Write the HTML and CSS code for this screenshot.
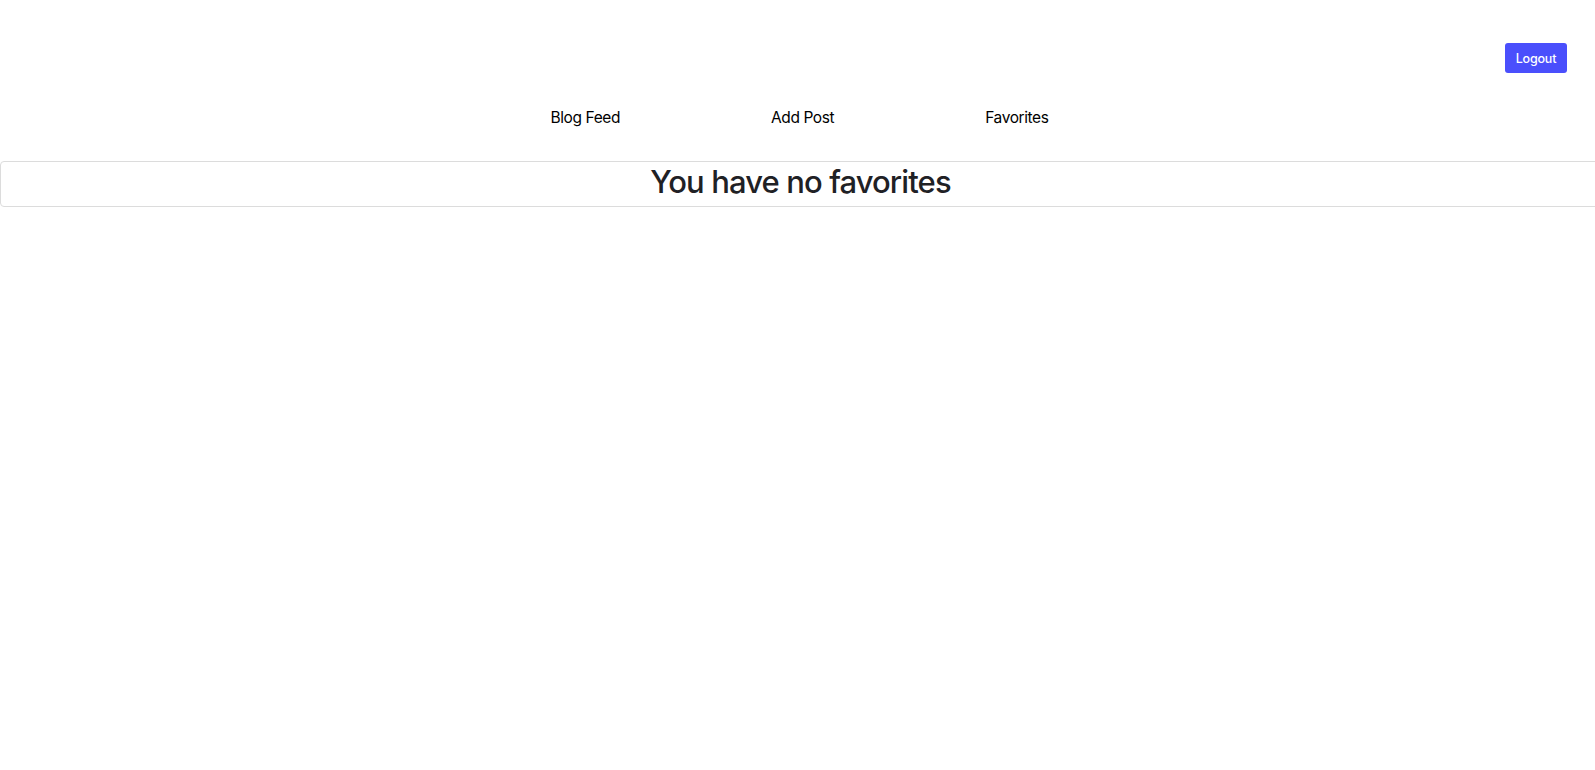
FILE: index.html
```html
<!DOCTYPE html>
<html lang="en">
<head>
<meta charset="utf-8">
<title>Favorites</title>
<link rel="stylesheet" href="styles.css">
</head>
<body>
<header class="topbar">
  <button class="logout" type="button">Logout</button>
</header>
<nav class="nav">
  <a class="nav-link" href="#">Blog Feed</a>
  <a class="nav-link" href="#">Add Post</a>
  <a class="nav-link" href="#">Favorites</a>
</nav>
<main class="content">
  <div class="card">
    <h2 class="empty">You have no favorites</h2>
  </div>
</main>
</body>
</html>
```
FILE: styles.css
```css
html, body {
  margin: 0;
  padding: 0;
  background: #fff;
  overflow-x: hidden;
}
body {
  font-family: Inter, "Liberation Sans", sans-serif;
  color: #212529;
}
.topbar {
  display: flex;
  justify-content: flex-end;
  padding: 43px 28px 0 0;
  height: 30px;
}
.logout {
  background: #4a4ffc;
  color: #fff;
  border: none;
  border-radius: 3px;
  font-family: Inter, "Liberation Sans", sans-serif;
  font-size: 12.5px;
  font-weight: 500;
  letter-spacing: -0.2px;
  width: 62px;
  height: 30px;
  padding: 0;
}
.nav {
  display: flex;
  justify-content: center;
  gap: 151px;
  padding: 35px 0 0 4px;
  height: 32px;
}
.nav-link {
  color: #000;
  text-decoration: none;
  font-size: 15.5px;
  letter-spacing: -0.4px;
  line-height: 20px;
}
.content {
  padding-top: 21px;
}
.card {
  width: calc(100% + 6px);
  border: 1px solid #dcdcdc;
  border-radius: 4px;
  box-sizing: border-box;
  height: 46px;
  text-align: center;
}
.empty {
  margin: 0;
  font-size: 31px;
  font-weight: 500;
  letter-spacing: -0.9px;
  line-height: 40px;
  color: #1f2125;
}
```
